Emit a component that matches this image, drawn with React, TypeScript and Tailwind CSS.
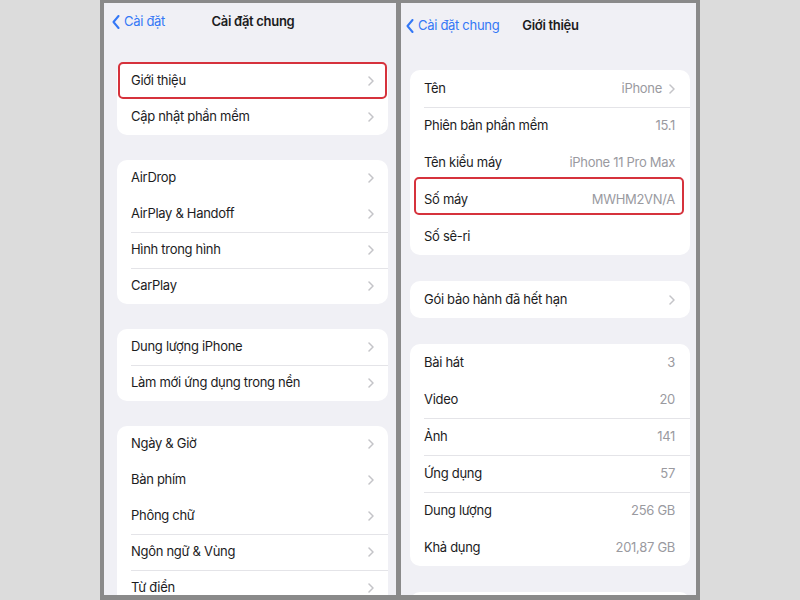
import React from "react";

const font = { fontFamily: "Inter, 'Noto Sans', 'Liberation Sans', sans-serif" };

function Chevron() {
  return (
    <svg width="6" height="10" viewBox="0 0 6 10" className="shrink-0">
      <path d="M1 1 L5 5 L1 9" fill="none" stroke="#c4c4c8" strokeWidth="1.5" strokeLinecap="round" strokeLinejoin="round" />
    </svg>
  );
}

function BackChevron() {
  return (
    <svg width="8" height="14" viewBox="0 0 8 14" className="shrink-0">
      <path d="M6.5 1 L1.5 7 L6.5 13" fill="none" stroke="#3478f6" strokeWidth="2" strokeLinecap="round" strokeLinejoin="round" />
    </svg>
  );
}

type Row = { label: string; value?: string; chevron?: boolean; sep?: boolean; highlight?: boolean };

function LeftGroup({ rows }: { rows: Row[] }) {
  return (
    <div className="ml-[13px] mr-[8px] bg-white rounded-[10px] flex flex-col shrink-0">
      {rows.map((r, i) => (
        <div key={i} className="relative h-[36px] flex items-center pl-[14px] pr-[14px]">
          {r.sep && <div className="absolute top-0 left-[14px] right-0 h-px bg-[#e4e4e8]" />}
          <span className="flex-1 text-[13px] tracking-[-0.3px] text-[#1c1c1e]">{r.label}</span>
          <Chevron />
          {r.highlight && (
            <div className="absolute left-[1px] right-[1px] top-[-1px] bottom-0 border-2 border-[#d6323c] rounded-[5px]" />
          )}
        </div>
      ))}
    </div>
  );
}

function RightGroup({ rows }: { rows: Row[] }) {
  return (
    <div className="ml-[9px] mr-[6px] bg-white rounded-[10px] flex flex-col shrink-0">
      {rows.map((r, i) => (
        <div key={i} className="relative h-[37px] flex items-center pl-[14px] pr-[15px]">
          {r.sep && <div className="absolute top-0 left-[14px] right-0 h-px bg-[#e4e4e8]" />}
          <span className="flex-1 text-[13px] tracking-[-0.3px] text-[#1c1c1e]">{r.label}</span>
          {r.value && <span className="text-[13px] tracking-[-0.3px] text-[#9a9a9f]">{r.value}</span>}
          {r.chevron && (
            <span className="ml-[7px]">
              <Chevron />
            </span>
          )}
          {r.highlight && (
            <div className="absolute left-[4px] right-[6px] top-[-4px] bottom-[3px] border-2 border-[#d6323c] rounded-[5px]" />
          )}
        </div>
      ))}
    </div>
  );
}

export default function App() {
  return (
    <div className="w-[800px] h-[600px] bg-[#dcdcdc] flex justify-center" style={font}>
      <div className="w-[600px] h-full bg-[#8a8a8a] flex gap-[5px] px-[4px] pt-[3px] pb-[5px]">
        {/* Left panel */}
        <div className="w-[292px] h-full bg-[#f0f0f5] overflow-hidden flex flex-col">
          <div className="h-[37px] relative flex items-center shrink-0">
            <div className="flex items-center gap-[4px] pl-[8px] text-[13px] tracking-[-0.3px] text-[#3478f6]">
              <BackChevron />
              <span>Cài đặt</span>
            </div>
            <div className="absolute left-0 right-0 text-center text-[13px] tracking-[-0.3px] font-semibold text-[#1c1c1e] pointer-events-none pl-[6px]">
              Cài đặt chung
            </div>
          </div>
          <div className="h-[23px] shrink-0" />
          <div className="flex flex-col gap-[25px]">
            <LeftGroup rows={[{ label: "Giới thiệu", highlight: true }, { label: "Cập nhật phần mềm" }]} />
            <LeftGroup
              rows={[
                { label: "AirDrop" },
                { label: "AirPlay & Handoff" },
                { label: "Hình trong hình", sep: true },
                { label: "CarPlay", sep: true },
              ]}
            />
            <LeftGroup rows={[{ label: "Dung lượng iPhone" }, { label: "Làm mới ứng dụng trong nền", sep: true }]} />
            <LeftGroup
              rows={[
                { label: "Ngày & Giờ" },
                { label: "Bàn phím" },
                { label: "Phông chữ" },
                { label: "Ngôn ngữ & Vùng", sep: true },
                { label: "Từ điển", sep: true },
              ]}
            />
          </div>
        </div>

        {/* Right panel */}
        <div className="w-[295px] h-full bg-[#f0f0f5] overflow-hidden flex flex-col">
          <div className="h-[46px] flex items-center shrink-0">
            <div className="flex items-center gap-[4px] pl-[5px] text-[13px] tracking-[-0.3px] text-[#3478f6]">
              <BackChevron />
              <span>Cài đặt chung</span>
            </div>
            <div className="ml-[23px] text-[13px] tracking-[-0.3px] font-semibold text-[#1c1c1e]">Giới thiệu</div>
          </div>
          <div className="h-[21px] shrink-0" />
          <div className="flex flex-col gap-[26px]">
            <RightGroup
              rows={[
                { label: "Tên", value: "iPhone", chevron: true },
                { label: "Phiên bản phần mềm", value: "15.1", sep: true },
                { label: "Tên kiểu máy", value: "iPhone 11 Pro Max" },
                { label: "Số máy", value: "MWHM2VN/A", highlight: true },
                { label: "Số sê-ri" },
              ]}
            />
            <RightGroup rows={[{ label: "Gói bảo hành đã hết hạn", chevron: true }]} />
            <RightGroup
              rows={[
                { label: "Bài hát", value: "3" },
                { label: "Video", value: "20" },
                { label: "Ảnh", value: "141", sep: true },
                { label: "Ứng dụng", value: "57", sep: true },
                { label: "Dung lượng", value: "256 GB", sep: true },
                { label: "Khả dụng", value: "201,87 GB" },
              ]}
            />
            <RightGroup rows={[{ label: "" }]} />
          </div>
        </div>
      </div>
    </div>
  );
}
